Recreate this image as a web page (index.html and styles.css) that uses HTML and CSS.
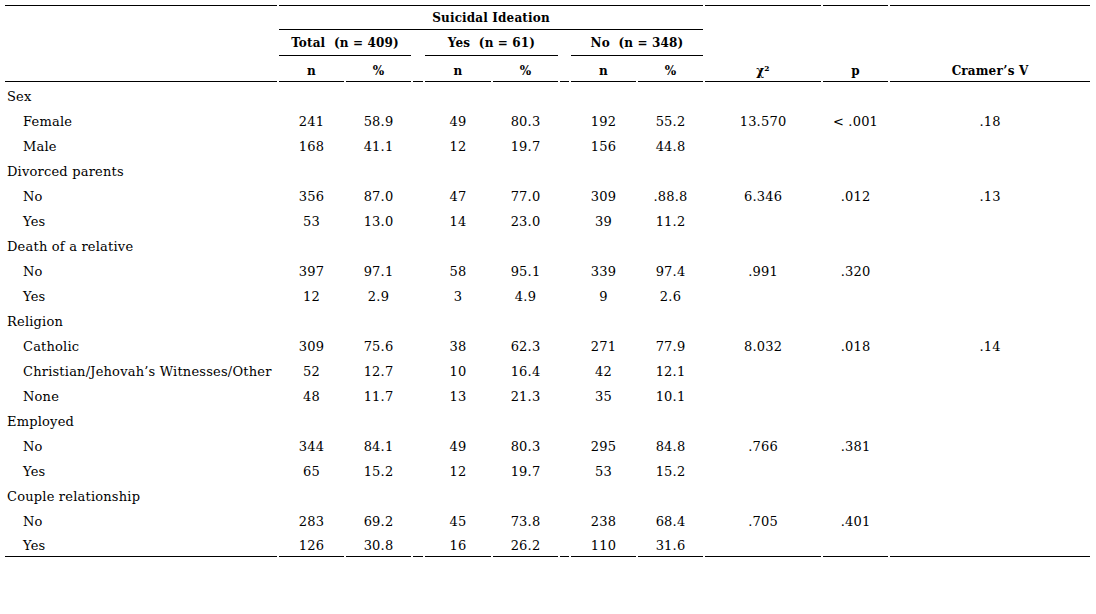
FILE: index.html
```html
<!DOCTYPE html>
<html>
<head>
<meta charset="utf-8">
<link rel="stylesheet" href="styles.css">
</head>
<body>
<table class="stats">
  <colgroup>
    <col class="c-label">
    <col class="c-n"><col class="c-pct"><col class="c-sp">
    <col class="c-n2"><col class="c-pct"><col class="c-sp2">
    <col class="c-n"><col class="c-pct">
    <col class="c-chi"><col class="c-p"><col class="c-v">
  </colgroup>
  <thead>
    <tr class="h1">
      <th class="top bot" rowspan="3"></th>
      <th class="top bot" colspan="8">Suicidal Ideation</th>
      <th class="top bot low" rowspan="3">χ²</th>
      <th class="top bot low" rowspan="3">p</th>
      <th class="top bot low" rowspan="3">Cramer’s V</th>
    </tr>
    <tr class="h2">
      <th class="bot" colspan="2">Total &nbsp;(n = 409)</th>
      <th></th>
      <th class="bot" colspan="2">Yes &nbsp;(n = 61)</th>
      <th></th>
      <th class="bot" colspan="2">No &nbsp;(n = 348)</th>
    </tr>
    <tr class="h3">
      <th class="bot">n</th><th class="bot">%</th><th class="bot"></th>
      <th class="bot">n</th><th class="bot">%</th><th class="bot"></th>
      <th class="bot">n</th><th class="bot">%</th>
    </tr>
  </thead>
  <tbody>
    <tr class="grp"><td class="lbl">Sex</td><td></td><td></td><td></td><td></td><td></td><td></td><td></td><td></td><td></td><td></td><td></td></tr>
    <tr><td class="lbl sub">Female</td><td>241</td><td>58.9</td><td></td><td>49</td><td>80.3</td><td></td><td>192</td><td>55.2</td><td>13.570</td><td>&lt; .001</td><td>.18</td></tr>
    <tr><td class="lbl sub">Male</td><td>168</td><td>41.1</td><td></td><td>12</td><td>19.7</td><td></td><td>156</td><td>44.8</td><td></td><td></td><td></td></tr>

    <tr class="grp"><td class="lbl">Divorced parents</td><td></td><td></td><td></td><td></td><td></td><td></td><td></td><td></td><td></td><td></td><td></td></tr>
    <tr><td class="lbl sub">No</td><td>356</td><td>87.0</td><td></td><td>47</td><td>77.0</td><td></td><td>309</td><td>.88.8</td><td>6.346</td><td>.012</td><td>.13</td></tr>
    <tr><td class="lbl sub">Yes</td><td>53</td><td>13.0</td><td></td><td>14</td><td>23.0</td><td></td><td>39</td><td>11.2</td><td></td><td></td><td></td></tr>

    <tr class="grp"><td class="lbl">Death of a relative</td><td></td><td></td><td></td><td></td><td></td><td></td><td></td><td></td><td></td><td></td><td></td></tr>
    <tr><td class="lbl sub">No</td><td>397</td><td>97.1</td><td></td><td>58</td><td>95.1</td><td></td><td>339</td><td>97.4</td><td>.991</td><td>.320</td><td></td></tr>
    <tr><td class="lbl sub">Yes</td><td>12</td><td>2.9</td><td></td><td>3</td><td>4.9</td><td></td><td>9</td><td>2.6</td><td></td><td></td><td></td></tr>

    <tr class="grp"><td class="lbl">Religion</td><td></td><td></td><td></td><td></td><td></td><td></td><td></td><td></td><td></td><td></td><td></td></tr>
    <tr><td class="lbl sub">Catholic</td><td>309</td><td>75.6</td><td></td><td>38</td><td>62.3</td><td></td><td>271</td><td>77.9</td><td>8.032</td><td>.018</td><td>.14</td></tr>
    <tr><td class="lbl sub">Christian/Jehovah’s Witnesses/Other</td><td>52</td><td>12.7</td><td></td><td>10</td><td>16.4</td><td></td><td>42</td><td>12.1</td><td></td><td></td><td></td></tr>
    <tr><td class="lbl sub">None</td><td>48</td><td>11.7</td><td></td><td>13</td><td>21.3</td><td></td><td>35</td><td>10.1</td><td></td><td></td><td></td></tr>

    <tr class="grp"><td class="lbl">Employed</td><td></td><td></td><td></td><td></td><td></td><td></td><td></td><td></td><td></td><td></td><td></td></tr>
    <tr><td class="lbl sub">No</td><td>344</td><td>84.1</td><td></td><td>49</td><td>80.3</td><td></td><td>295</td><td>84.8</td><td>.766</td><td>.381</td><td></td></tr>
    <tr><td class="lbl sub">Yes</td><td>65</td><td>15.2</td><td></td><td>12</td><td>19.7</td><td></td><td>53</td><td>15.2</td><td></td><td></td><td></td></tr>

    <tr class="grp"><td class="lbl">Couple relationship</td><td></td><td></td><td></td><td></td><td></td><td></td><td></td><td></td><td></td><td></td><td></td></tr>
    <tr><td class="lbl sub">No</td><td>283</td><td>69.2</td><td></td><td>45</td><td>73.8</td><td></td><td>238</td><td>68.4</td><td>.705</td><td>.401</td><td></td></tr>
    <tr class="last"><td class="lbl sub">Yes</td><td>126</td><td>30.8</td><td></td><td>16</td><td>26.2</td><td></td><td>110</td><td>31.6</td><td></td><td></td><td></td></tr>
  </tbody>
</table>
</body>
</html>
```

FILE: styles.css
```css
html, body {
  margin: 0;
  padding: 0;
  background: #ffffff;
}

.stats {
  margin: 5px 0 0 3px;
  width: 1089px;
  table-layout: fixed;
  border-collapse: separate;
  border-spacing: 2px 0;
  font-family: "DejaVu Serif", "Liberation Serif", serif;
  font-size: 13px;
  letter-spacing: 0.2px;
  color: #000000;
}

.c-label { width: 272px; }
.c-n { width: 65px; }
.c-n2 { width: 66px; }
.c-pct { width: 65px; }
.c-sp { width: 10px; }
.c-sp2 { width: 9px; }
.c-chi { width: 116px; }
.c-p { width: 65px; }
.c-v { width: 200px; }

.stats th,
.stats td {
  padding: 0;
  text-align: center;
  white-space: nowrap;
  overflow: visible;
}

.stats th {
  font-weight: bold;
  font-size: 12px;
  letter-spacing: 0.15px;
  vertical-align: middle;
}

.top { border-top: 1px solid #000; }
.bot { border-bottom: 1px solid #000; }

.h1 { height: 25px; }
.h2 { height: 26px; }
.h3 { height: 26px; }

.stats th.low {
  vertical-align: bottom;
  padding-bottom: 3px;
}

.h3 th {
  vertical-align: bottom;
  padding-bottom: 3px;
}

.stats tbody tr { height: 25px; }

.stats td {
  padding-top: 3px;
}

.stats td.lbl {
  text-align: left;
  padding-left: 2px;
}

.stats td.sub { padding-left: 18px; }

.stats tr.last td { border-bottom: 1px solid #000; }
```
